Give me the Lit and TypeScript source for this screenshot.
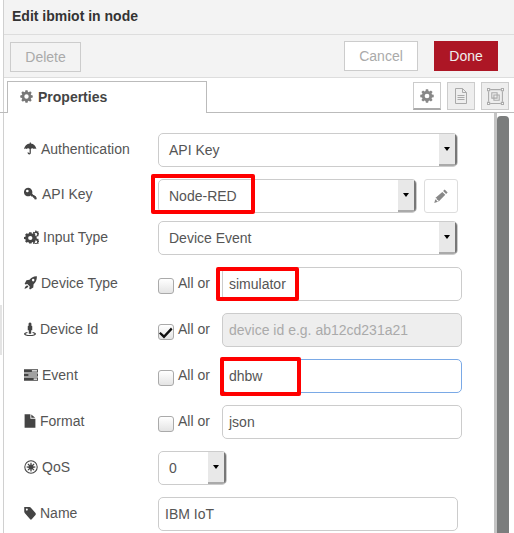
import {LitElement, html, css, svg} from 'lit';
import {customElement} from 'lit/decorators.js';

const icons: Record<string, unknown> = {
  umbrella: svg`<path d="M7.100 .5v1.300C3.400 2.100 .6 4.800 0 8.200c.9-1 2.400-1.100 3.200-.2.800-1 2.800-1.100 3.700-.1v4.300c0 .7-.9.700-1.100.2-.1-.5-.4-.8-.9-.7-.5.100-.7.500-.5 1 .3 1.200 1.300 1.800 2.300 1.600 1-.2 1.700-1 1.700-2.100V7.900c.9-1 2.900-.9 3.700.1.800-.9 2.300-.8 3.200.2-.6-3.400-3.400-6.100-6.800-6.400V.5z"/>`,
  key: svg`<path fill-rule="evenodd" d="M5 .8a5 5 0 0 0-1.700 9.700 5 5 0 0 0 4.300-.9l1.300 1.400 1.200-.2.200 1.400 1.300.1.300 1.600 2.100.3.800-1.900-1.300-.7.100-1.200-1.500-.1-.1-1.300-1.300.1L9.300 7.300A5 5 0 0 0 5 .8zM3.800 3a1.500 1.500 0 1 1 0 3 1.500 1.500 0 0 1 0-3z"/>`,
  cogs: svg`<path fill-rule="evenodd" d="M4 3.500h2.600l.3 1.500 1 .4 1.300-.8 1.700 1.700-.8 1.300.4 1 1.500.3v2.400l-1.500.3-.4 1 .8 1.300-1.700 1.700-1.300-.8-1 .4-.3 1.300H4l-.3-1.300-1-.4-1.300.8L-.300 13.900l.8-1.300-.4-1L-1.400 11.300V8.900l1.500-.3.400-1-.8-1.300 1.700-1.700 1.300.8 1-.4zM5.300 7.800a2.300 2.300 0 1 0 0 4.600 2.300 2.300 0 0 0 0-4.600z" transform="translate(1.400 -1)"/><path fill-rule="evenodd" d="M12 .5h1.200l.2 1 .7.3.8-.5.8.8-.5.800.3.700 1 .2v1.200l-1 .2-.3.700.5.800-.8.8-.8-.5-.7.300-.2 1H12l-.2-1-.7-.3-.8.5-.8-.8.5-.8-.3-.7-1-.2V4.500l1-.2.3-.7-.5-.8.8-.8.8.5.7-.3zM12.600 3.500a1.500 1.500 0 1 0 0 3 1.500 1.500 0 0 0 0-3zM12 9h1.200l.2 1 .7.300.8-.5.8.8-.5.800.3.700 1 .2v1.200l-1 .2-.3.700.5.800-.8.8-.8-.5-.7.300-.2 1H12l-.2-1-.7-.3-.8.5-.8-.8.5-.8-.3-.7-1-.2V13l1-.2.3-.7-.5-.8.8-.8.8.5.7-.3zM12.600 12a1.500 1.500 0 1 0 0 3 1.500 1.500 0 0 0 0-3z"/>`,
  rocket: svg`<path fill-rule="evenodd" d="M15.800 .2c.3 3.800-1.100 6.800-4 9.200l-.4 3.800-4 2.300-1-1.100.7-2.300-3-3-2.300.7-1-1L3 4.800l3.800-.4C9.200 1.400 12.100 0 15.800 .2zM11.300 3.200a1.500 1.500 0 1 0 0 3 1.500 1.500 0 0 0 0-3z"/><path d="M3 11c1-.5 2-.1 2.400 1-.8 1.500-2.800 2.300-4.800 2.700.3-1.700 1.100-3.100 2.400-3.700z"/>`,
  street: svg`<path d="M8 .5a2 2 0 1 1-.01 0zM5 5c0-.6.400-1 1-1h4c.6 0 1 .4 1 1v4.500H9.600v3.800H6.400V9.500H5z"/><path d="M4.600 11.300v1.300C3 12.800 2 13.200 2 13.700c0 .6 2.500 1.100 6 1.100s6-.5 6-1.100c0-.5-1-.9-2.600-1.100v-1.300C14 11.600 16 12.400 16 13.700c0 1.500-3.400 2.300-8 2.300s-8-.8-8-2.300c0-1.300 2-2.100 4.600-2.400z"/>`,
  tasks: svg`<path fill-rule="evenodd" d="M0 1.500h16v3.600H0zM9 2.600v1.400h6V2.600zM0 6.200h16v3.600H0zM5 7.300v1.400h10V7.300zM0 10.900h16v3.600H0zM11 12v1.400h4V12z"/>`,
  file: svg`<path d="M.8 .2h7.700v5.300h6.700v10.300H.8zM9.700 .5l5.200 3.800H9.700z"/>`,
  qos: svg`<path fill-rule="evenodd" d="M8 .3a7.700 7.700 0 1 1 0 15.400A7.700 7.700 0 0 1 8 .3zM8 1.500a6.500 6.500 0 1 0 0 13 6.500 6.500 0 0 0 0-13z"/><path d="M7.400 3h1.200l.3 3 2.300-1.900.8.800-1.900 2.300 2.900.300v1.200l-2.900.3 1.900 2.300-.8.800-2.300-1.900-.3 2.900H7.400l-.3-2.900-2.300 1.900-.8-.8 1.900-2.300-2.900-.3V7.400l2.900-.3-1.900-2.300.8-.8 2.300 1.900z"/>`,
  tag: svg`<path fill-rule="evenodd" d="M.3 1h7c.6 0 1.200.3 1.600.7l6.400 6.400c.6.600.6 1.500 0 2.100l-5 5c-.6.600-1.500.6-2.100 0L1.800 8.800C1 8.100.3 7.200.3 6.200zM3.800 2.800a1.300 1.300 0 1 0 0 2.600 1.300 1.300 0 0 0 0-2.600z"/>`,
  gear: svg`<path fill-rule="evenodd" d="M6.700 .3h2.600l.4 2 1.100.5 1.700-1.200 1.900 1.900-1.200 1.700.5 1.100 2 .4v2.600l-2 .4-.5 1.100 1.200 1.700-1.900 1.900-1.700-1.200-1.100.5-.4 2H6.700l-.4-2-1.100-.5-1.700 1.200-1.900-1.900 1.200-1.700-.5-1.100-2-.4V6.700l2-.4.5-1.100-1.200-1.700 1.900-1.900 1.700 1.200 1.100-.5zM8 5.300a2.700 2.700 0 1 0 0 5.400 2.700 2.700 0 0 0 0-5.400z"/>`,
  pencil: svg`<path d="M12.200 .6l3.400 3.400-1.800 1.800-3.400-3.400zM9.500 3.300l3.400 3.400-7.800 7.800-.2-1.800-1.700-.3-.2-1.800-1.500-.2z"/><path d="M1.500 11.700l3 3L.3 16z"/>`,
  doc: svg`<path fill="none" stroke="currentColor" d="M2.500 .5h7l4 4v11h-11zM9.500 .5v4h4M4.500 7.500h7M4.500 9.500h7M4.500 11.500h7"/>`,
  frame: svg`<path fill="none" stroke="currentColor" d="M3 1.500h10M3 14.500h10M1.500 3v10M14.500 3v10M4.500 4.500h5v5h-5zM6.500 6.500h5v5h-5z"/><path d="M.5.500h2v2h-2zM13.500 .5h2v2h-2zM.5 13.500h2v2h-2zM13.500 13.500h2v2h-2z" fill="#fff" stroke="currentColor"/>`,
};

const icon = (name: string, width = 15, height = width) => html`
  <svg class="icon" width=${width} height=${height} viewBox="0 0 16 16" preserveAspectRatio="none" fill="currentColor">${icons[name]}</svg>
`;

@customElement('app-root')
export class AppRoot extends LitElement {
  static styles = css`
    :host {
      display: block;
      position: relative;
      width: 514px;
      height: 533px;
      overflow: hidden;
      background: #fff;
      font-family: "Liberation Sans", Arial, sans-serif;
      font-size: 14px;
      color: #555;
    }

    .handle {
      position: absolute;
      left: 0;
      top: 305px;
      width: 2px;
      height: 50px;
      background: #e4e4e4;
    }

    .tray {
      height: 533px;
      box-sizing: border-box;
      border-left: 1px solid #d0d0d0;
      margin-left: 3px;
      display: flex;
      flex-direction: column;
    }

    .title {
      height: 35px;
      box-sizing: border-box;
      background: #f3f3f3;
      border-bottom: 1px solid #ddd;
      padding: 8px 0 0 8px;
      font-weight: bold;
      color: #333;
    }

    .toolbar {
      height: 43px;
      box-sizing: border-box;
      background: #f3f3f3;
      border-bottom: 1px solid #ddd;
      padding: 6px 16px 0 6px;
      display: flex;
      gap: 16px;
    }

    .btn {
      height: 30px;
      box-sizing: border-box;
      background: #fff;
      border: 1px solid #ccc;
      color: #aaa;
      display: flex;
      align-items: center;
      justify-content: center;
    }

    .delete { width: 71px; margin-right: auto; margin-top: 1px; background: #f3f3f3; }
    .cancel { width: 74px; }
    .done { width: 64px; background: #ad1625; border-color: #ad1625; color: #eee; }

    .tabs {
      height: 35px;
      box-sizing: border-box;
      margin-left: -4px;
      border-bottom: 1px solid #bbb;
      padding: 3px 5px 0 7px;
      display: flex;
      gap: 6px;
    }

    .tab {
      width: 200px;
      height: 32px;
      box-sizing: border-box;
      background: #fff;
      border: 1px solid #bbb;
      border-bottom: none;
      padding: 0 0 2px 12px;
      display: flex;
      align-items: center;
      gap: 5px;
      font-weight: bold;
      color: #444;
      margin-right: auto;
    }

    .tab .icon { color: #777; }

    .tool {
      width: 28px;
      height: 28px;
      margin-top: 1px;
      box-sizing: border-box;
      border: 1px solid #ccc;
      background: #eee;
      color: #aaa;
      display: flex;
      align-items: center;
      justify-content: center;
    }

    .tool.active {
      background: #fff;
      border-bottom: 2px solid #aaa;
      color: #888;
    }

    .content {
      flex: 1;
      display: flex;
      min-height: 0;
    }

    .form {
      flex: 1;
      padding: 20px 0 0 16px;
      display: flex;
      flex-direction: column;
      min-width: 0;
    }

    .row {
      display: flex;
      flex: none;
      height: 34px;
      margin-bottom: 12px;
      position: relative;
    }

    .row.tight { margin-bottom: 8px; }
    .row.tight .label { padding-top: 7px; }

    .label {
      width: 138px;
      flex: none;
      display: flex;
      align-items: flex-start;
      gap: 4px;
      padding: 8px 0 0 4px;
      box-sizing: border-box;
      color: #555;
    }

    .label .icon { color: #444; flex: none; margin-top: 1px; }

    .select {
      height: 34px;
      box-sizing: border-box;
      border: 1px solid #ccc;
      border-radius: 5px;
      display: flex;
      align-items: center;
      padding-left: 10px;
      background: #fff;
      overflow: hidden;
    }

    .select span { flex: 1; }

    .caret {
      width: 18px;
      height: 32px;
      box-sizing: border-box;
      background: #e8e8e8;
      border-right: 2px solid #777;
      border-bottom: 2px solid #aaa;
      display: flex;
      align-items: center;
      justify-content: center;
    }

    .caret::before {
      content: "";
      border: 3.5px solid transparent;
      border-top: 4px solid #000;
      border-bottom: none;
    }

    .edit {
      width: 34px;
      height: 34px;
      box-sizing: border-box;
      border: 1px solid #ddd;
      border-radius: 3px;
      margin-left: 7px;
      color: #888;
      display: flex;
      align-items: center;
      justify-content: center;
    }

    .check {
      width: 16px;
      height: 16px;
      flex: none;
      box-sizing: border-box;
      margin: 11px 4px 0 0;
      border: 1px solid #aaa;
      border-radius: 3px;
      background: linear-gradient(#fff, #e4e4e4);
      color: #111;
      display: flex;
      align-items: center;
      justify-content: center;
    }

    .all {
      width: 44px;
      flex: none;
      padding-top: 8px;
      box-sizing: border-box;
    }

    .input {
      height: 34px;
      box-sizing: border-box;
      border: 1px solid #ccc;
      border-radius: 5px;
      padding: 0 6px;
      display: flex;
      align-items: center;
      background: #fff;
    }

    .input.disabled { background: #eee; color: #aaa; }
    .input.focus { border-color: #7aa9e6; }

    .mark {
      position: absolute;
      box-sizing: border-box;
      border: 4px solid #f00;
      border-radius: 2px;
    }

    .scroll {
      width: 20px;
      flex: none;
      box-sizing: border-box;
      background: #fff;
      border-left: 3px solid #c4c4c4;
      padding-top: 3px;
    }

    .thumb {
      width: 12px;
      height: 500px;
      background: #7b7d7d;
      border-radius: 4px;
    }
  `;

  private row(name: string, width: number, label: string, body: unknown, tight = false) {
    return html`
      <div class="row ${tight ? 'tight' : ''}">
        <div class="label">${icon(name, width, 14)}<span>${label}</span></div>
        ${body}
      </div>
    `;
  }

  private select(value: string, width: number) {
    return html`
      <div class="select" style="width:${width}px"><span>${value}</span><div class="caret"></div></div>
    `;
  }

  private allOr(checked: boolean) {
    return html`
      <div class="check">${checked ? html`<svg width="14" height="14" viewBox="0 0 14 14"><path d="M1.500 7l3.500 3 7-7.500 1.500 2L5 13.500 0 8.500z" fill="currentColor"/></svg>` : ''}</div>
      <div class="all">All or</div>
    `;
  }

  render() {
    return html`
      <div class="handle"></div>
      <div class="tray">
        <div class="title">Edit ibmiot in node</div>
        <div class="toolbar">
          <div class="btn delete">Delete</div>
          <div class="btn cancel">Cancel</div>
          <div class="btn done">Done</div>
        </div>
        <div class="tabs">
          <div class="tab">${icon('gear', 13)}Properties</div>
          <div class="tool active">${icon('gear', 14)}</div>
          <div class="tool">${icon('doc', 16)}</div>
          <div class="tool">${icon('frame', 17)}</div>
        </div>
        <div class="content">
          <div class="form">
            ${this.row('umbrella', 13, 'Authentication', this.select('API Key', 300))}
            ${this.row('key', 14, 'API Key', html`
              ${this.select('Node-RED', 259)}
              <div class="edit">${icon('pencil', 14)}</div>
              <div class="mark" style="left:131px;top:-5px;width:104px;height:40px"></div>
            `, true)}
            ${this.row('cogs', 15, 'Input Type', this.select('Device Event', 300))}
            ${this.row('rocket', 13, 'Device Type', html`
              ${this.allOr(false)}
              <div class="input" style="width:240px">simulator</div>
              <div class="mark" style="left:196px;top:0;width:83px;height:34px"></div>
            `)}
            ${this.row('street', 12, 'Device Id', html`
              ${this.allOr(true)}
              <div class="input disabled" style="width:240px">device id e.g. ab12cd231a21</div>
            `)}
            ${this.row('tasks', 14, 'Event', html`
              ${this.allOr(false)}
              <div class="input focus" style="width:240px">dhbw</div>
              <div class="mark" style="left:200px;top:-2px;width:81px;height:39px"></div>
            `)}
            ${this.row('file', 12, 'Format', html`
              ${this.allOr(false)}
              <div class="input" style="width:240px">json</div>
            `)}
            ${this.row('qos', 14, 'QoS', this.select('0', 69))}
            ${this.row('tag', 12, 'Name', html`<div class="input" style="width:300px">IBM IoT</div>`)}
          </div>
          <div class="scroll"><div class="thumb"></div></div>
        </div>
      </div>
    `;
  }
}
